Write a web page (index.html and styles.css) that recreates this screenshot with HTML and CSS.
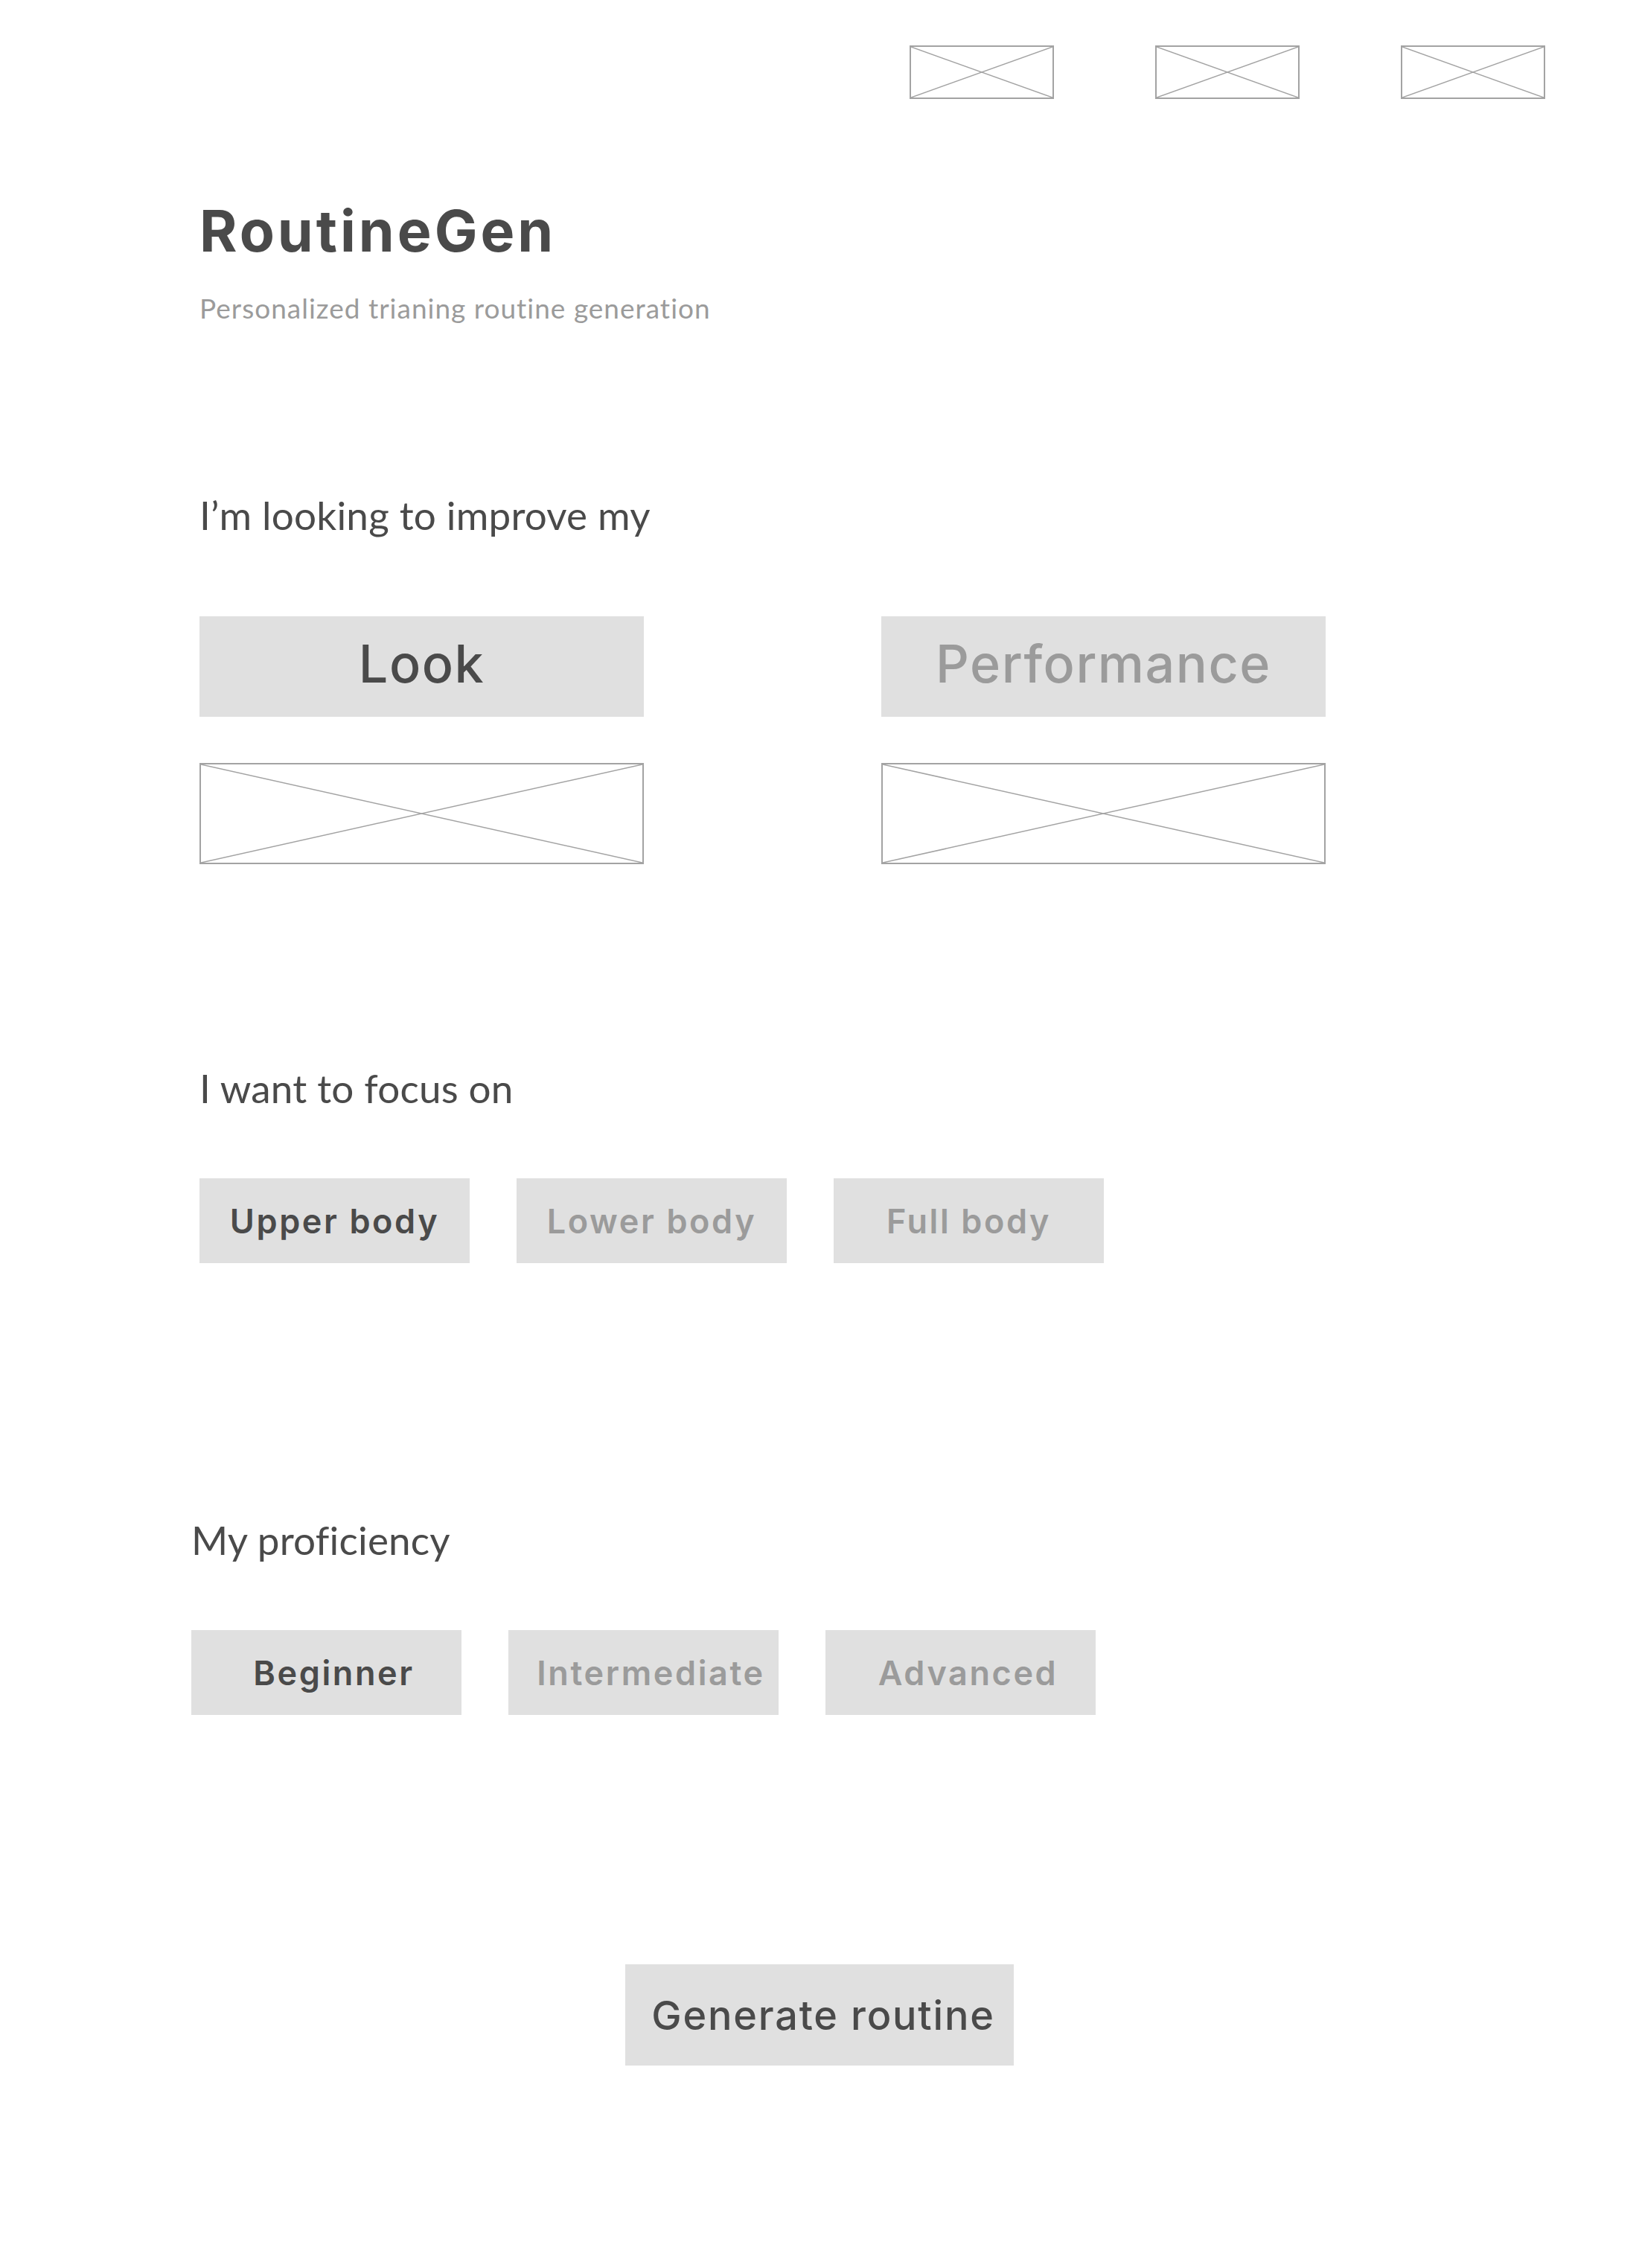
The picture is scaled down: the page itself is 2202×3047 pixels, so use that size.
FILE: index.html
```html
<!DOCTYPE html>
<html lang="en">
<head>
<meta charset="utf-8">
<title>RoutineGen</title>
<link rel="stylesheet" href="styles.css">
</head>
<body>
<header class="topbar">
  <svg class="ph ph-nav" viewBox="0 0 100 100" preserveAspectRatio="none"><line x1="0" y1="0" x2="100" y2="100"/><line x1="0" y1="100" x2="100" y2="0"/></svg>
  <svg class="ph ph-nav" viewBox="0 0 100 100" preserveAspectRatio="none"><line x1="0" y1="0" x2="100" y2="100"/><line x1="0" y1="100" x2="100" y2="0"/></svg>
  <svg class="ph ph-nav" viewBox="0 0 100 100" preserveAspectRatio="none"><line x1="0" y1="0" x2="100" y2="100"/><line x1="0" y1="100" x2="100" y2="0"/></svg>
</header>

<main class="page">
  <section class="intro">
    <h1 class="title">RoutineGen</h1>
    <p class="subtitle">Personalized trianing routine generation</p>
  </section>

  <section class="question q-goal">
    <h2 class="prompt">I’m looking to improve my</h2>
    <div class="goal-grid">
      <div class="goal-col">
        <button class="opt opt-big is-on">Look</button>
        <svg class="ph ph-goal" viewBox="0 0 100 100" preserveAspectRatio="none"><line x1="0" y1="0" x2="100" y2="100"/><line x1="0" y1="100" x2="100" y2="0"/></svg>
      </div>
      <div class="goal-col">
        <button class="opt opt-big">Performance</button>
        <svg class="ph ph-goal" viewBox="0 0 100 100" preserveAspectRatio="none"><line x1="0" y1="0" x2="100" y2="100"/><line x1="0" y1="100" x2="100" y2="0"/></svg>
      </div>
    </div>
  </section>

  <section class="question q-focus">
    <h2 class="prompt">I want to focus on</h2>
    <div class="chips">
      <button class="opt chip is-on">Upper body</button>
      <button class="opt chip">Lower body</button>
      <button class="opt chip">Full body</button>
    </div>
  </section>

  <section class="question q-level">
    <h2 class="prompt">My proficiency</h2>
    <div class="chips">
      <button class="opt chip is-on">Beginner</button>
      <button class="opt chip">Intermediate</button>
      <button class="opt chip">Advanced</button>
    </div>
  </section>
</main>

<div class="actions">
  <button class="opt generate is-on">Generate routine</button>
</div>
</body>
</html>
```

FILE: styles.css
```css
html, body {
  margin: 0;
  padding: 0;
  background: #ffffff;
}

body {
  width: 2202px;
  min-height: 3047px;
  font-family: Lato, "Liberation Sans", sans-serif;
  color: #4a4a4a;
}

/* placeholders */
.ph {
  display: block;
  box-sizing: border-box;
  border: 2px solid #a3a3a3;
  background: #fff;
}
.ph line {
  stroke: #a3a3a3;
  stroke-width: 1.5;
  vector-effect: non-scaling-stroke;
}

.topbar {
  display: flex;
  justify-content: flex-end;
  gap: 136px;
  padding: 61px 126px 0 0;
}
.ph-nav {
  width: 194px;
  height: 72px;
}

.page {
  padding-left: 268px;
}

.title {
  margin: 139px 0 0;
  font-family: Inter, "Liberation Sans", sans-serif;
  font-weight: 700;
  font-size: 77px;
  line-height: 77px;
  letter-spacing: 4px;
  color: #4a4a4a;
}

.subtitle {
  margin: 46px 0 0;
  font-family: Lato, "Liberation Sans", sans-serif;
  font-size: 37px;
  line-height: 37px;
  letter-spacing: 1px;
  font-variant-ligatures: none;
  color: #9b9b9b;
}

.prompt {
  margin: 0;
  font-family: Lato, "Liberation Sans", sans-serif;
  font-weight: 400;
  font-size: 53px;
  line-height: 53px;
  letter-spacing: 0.2px;
  color: #4a4a4a;
}

.q-goal { margin-top: 233px; }
.q-focus { margin-top: 274px; }
.q-level { margin-top: 345px; margin-left: -11px; }

.goal-grid {
  display: grid;
  grid-template-columns: 597px 597px;
  column-gap: 319px;
  margin-top: 110px;
}
.goal-col {
  display: flex;
  flex-direction: column;
  gap: 62px;
}
.ph-goal {
  width: 597px;
  height: 136px;
}

.opt {
  display: flex;
  align-items: center;
  justify-content: center;
  border: 0;
  margin: 0;
  padding: 0;
  background: #e0e0e0;
  font-family: Inter, "Liberation Sans", sans-serif;
  font-weight: 500;
  color: #9b9b9b;
  cursor: pointer;
}
.opt.is-on {
  color: #4a4a4a;
}

.opt-big {
  width: 597px;
  height: 135px;
  font-size: 70px;
  letter-spacing: 1.5px;
  padding-bottom: 8px;
}

.chips {
  display: flex;
  gap: 63px;
  margin-top: 95px;
}
.chip {
  width: 363px;
  height: 114px;
  font-size: 45px;
  font-weight: 600;
  letter-spacing: 2.6px;
}
.q-level .chip {
  padding-left: 20px;
}

.actions {
  display: flex;
  justify-content: center;
  padding-top: 335px;
}
.generate {
  width: 522px;
  height: 136px;
  font-size: 54px;
  letter-spacing: 1.8px;
  padding-left: 10px;
}
```
